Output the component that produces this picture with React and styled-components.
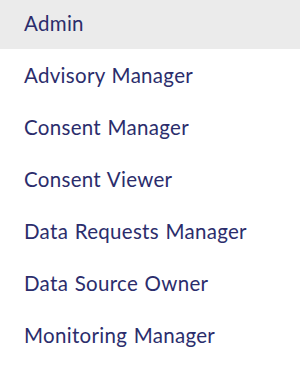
import React from "react";
import styled, { createGlobalStyle } from "styled-components";

const GlobalStyle = createGlobalStyle`
  html, body {
    margin: 0;
    padding: 0;
    background: #ffffff;
  }
  body {
    font-family: "Lato", "Noto Sans", sans-serif;
  }
`;

const Menu = styled.ul`
  list-style: none;
  margin: -3px 0 0 0;
  padding: 0;
  width: 300px;
  height: 370px;
  overflow: hidden;
  background: #ffffff;
`;

const Item = styled.li`
  display: flex;
  align-items: center;
  height: 52px;
  padding: 0 24px;
  box-sizing: border-box;
  font-size: 20.5px;
  font-weight: 400;
  letter-spacing: 0.3px;
  word-spacing: 1px;
  color: #2b2d6c;
  background: ${(p) => (p.$active ? "#ebebeb" : "transparent")};
  cursor: pointer;
`;

const roles = [
  "Admin",
  "Advisory Manager",
  "Consent Manager",
  "Consent Viewer",
  "Data Requests Manager",
  "Data Source Owner",
  "Monitoring Manager",
];

export default function App() {
  return (
    <>
      <GlobalStyle />
      <Menu>
        {roles.map((role, index) => (
          <Item key={role} $active={index === 0}>
            {role}
          </Item>
        ))}
      </Menu>
    </>
  );
}
